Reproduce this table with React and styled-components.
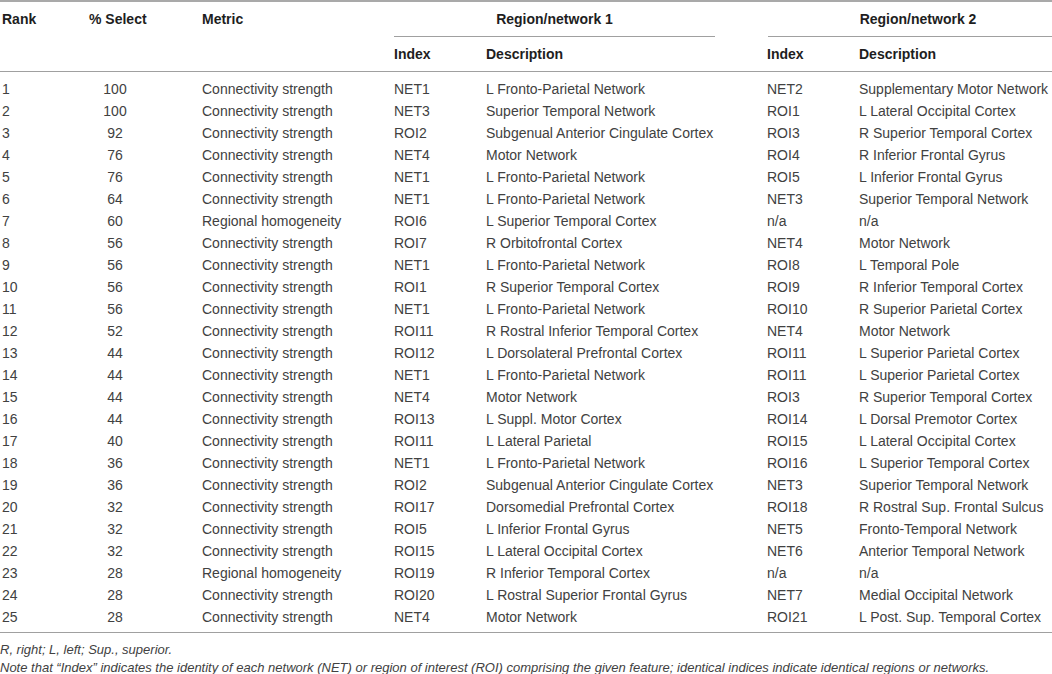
import React from "react";
import styled, { createGlobalStyle } from "styled-components";

const GlobalStyle = createGlobalStyle`
  html, body {
    margin: 0;
    padding: 0;
    background: #ffffff;
    overflow: hidden;
  }
  body {
    font-family: "Liberation Sans", Arial, Helvetica, sans-serif;
    color: #414141;
  }
`;

const Page = styled.div`
  width: 1068px;
`;

const Table = styled.table`
  width: 1068px;
  table-layout: fixed;
  border-collapse: separate;
  border-spacing: 0;
  border-top: 2px solid #a9a9a9;
  border-bottom: 1px solid #a0a0a0;
  font-size: 14px;
`;

const HeadCell = styled.th`
  text-align: left;
  font-weight: bold;
  color: #1e1e1e;
  padding: ${(p) => (p.$group ? "0" : "9px 0 8px")};
  padding-left: ${(p) => p.$pl || 0}px;
  line-height: 17px;
  vertical-align: top;
  white-space: nowrap;
  border-bottom: ${(p) => (p.$group ? "none" : "1px solid #a0a0a0")};
`;

const GroupLabel = styled.div`
  text-align: center;
  padding: 9px 0 8px;
  line-height: 17px;
  border-bottom: 1px solid #a0a0a0;
  margin-right: ${(p) => p.$mr || 0}px;
  margin-left: ${(p) => p.$ml || 0}px;
`;

const Cell = styled.td`
  line-height: 22px;
  padding: 0;
  padding-left: ${(p) => p.$pl || 0}px;
  padding-right: ${(p) => p.$pr || 0}px;
  text-align: ${(p) => (p.$center ? "center" : "left")};
  white-space: nowrap;
  color: #414141;
`;

const Row = styled.tr`
  & > td {
    padding-top: ${(p) => (p.$first ? 6 : 0)}px;
    padding-bottom: ${(p) => (p.$last ? 4 : 0)}px;
  }
`;

const Notes = styled.div`
  margin-top: 8px;
  font-size: 13px;
  font-style: italic;
  line-height: 18px;
  color: #414141;
  white-space: nowrap;
`;

const rows = [
  ["1", "100", "Connectivity strength", "NET1", "L Fronto-Parietal Network", "NET2", "Supplementary Motor Network"],
  ["2", "100", "Connectivity strength", "NET3", "Superior Temporal Network", "ROI1", "L Lateral Occipital Cortex"],
  ["3", "92", "Connectivity strength", "ROI2", "Subgenual Anterior Cingulate Cortex", "ROI3", "R Superior Temporal Cortex"],
  ["4", "76", "Connectivity strength", "NET4", "Motor Network", "ROI4", "R Inferior Frontal Gyrus"],
  ["5", "76", "Connectivity strength", "NET1", "L Fronto-Parietal Network", "ROI5", "L Inferior Frontal Gyrus"],
  ["6", "64", "Connectivity strength", "NET1", "L Fronto-Parietal Network", "NET3", "Superior Temporal Network"],
  ["7", "60", "Regional homogeneity", "ROI6", "L Superior Temporal Cortex", "n/a", "n/a"],
  ["8", "56", "Connectivity strength", "ROI7", "R Orbitofrontal Cortex", "NET4", "Motor Network"],
  ["9", "56", "Connectivity strength", "NET1", "L Fronto-Parietal Network", "ROI8", "L Temporal Pole"],
  ["10", "56", "Connectivity strength", "ROI1", "R Superior Temporal Cortex", "ROI9", "R Inferior Temporal Cortex"],
  ["11", "56", "Connectivity strength", "NET1", "L Fronto-Parietal Network", "ROI10", "R Superior Parietal Cortex"],
  ["12", "52", "Connectivity strength", "ROI11", "R Rostral Inferior Temporal Cortex", "NET4", "Motor Network"],
  ["13", "44", "Connectivity strength", "ROI12", "L Dorsolateral Prefrontal Cortex", "ROI11", "L Superior Parietal Cortex"],
  ["14", "44", "Connectivity strength", "NET1", "L Fronto-Parietal Network", "ROI11", "L Superior Parietal Cortex"],
  ["15", "44", "Connectivity strength", "NET4", "Motor Network", "ROI3", "R Superior Temporal Cortex"],
  ["16", "44", "Connectivity strength", "ROI13", "L Suppl. Motor Cortex", "ROI14", "L Dorsal Premotor Cortex"],
  ["17", "40", "Connectivity strength", "ROI11", "L Lateral Parietal", "ROI15", "L Lateral Occipital Cortex"],
  ["18", "36", "Connectivity strength", "NET1", "L Fronto-Parietal Network", "ROI16", "L Superior Temporal Cortex"],
  ["19", "36", "Connectivity strength", "ROI2", "Subgenual Anterior Cingulate Cortex", "NET3", "Superior Temporal Network"],
  ["20", "32", "Connectivity strength", "ROI17", "Dorsomedial Prefrontal Cortex", "ROI18", "R Rostral Sup. Frontal Sulcus"],
  ["21", "32", "Connectivity strength", "ROI5", "L Inferior Frontal Gyrus", "NET5", "Fronto-Temporal Network"],
  ["22", "32", "Connectivity strength", "ROI15", "L Lateral Occipital Cortex", "NET6", "Anterior Temporal Network"],
  ["23", "28", "Regional homogeneity", "ROI19", "R Inferior Temporal Cortex", "n/a", "n/a"],
  ["24", "28", "Connectivity strength", "ROI20", "L Rostral Superior Frontal Gyrus", "NET7", "Medial Occipital Network"],
  ["25", "28", "Connectivity strength", "NET4", "Motor Network", "ROI21", "L Post. Sup. Temporal Cortex"],
];

export default function App() {
  return (
    <Page>
      <GlobalStyle />
      <Table>
        <colgroup>
          <col style={{ width: 89 }} />
          <col style={{ width: 113 }} />
          <col style={{ width: 192 }} />
          <col style={{ width: 92 }} />
          <col style={{ width: 281 }} />
          <col style={{ width: 92 }} />
          <col style={{ width: 209 }} />
        </colgroup>
        <thead>
          <tr>
            <HeadCell rowSpan={2} $pl={2}>Rank</HeadCell>
            <HeadCell rowSpan={2}>% Select</HeadCell>
            <HeadCell rowSpan={2}>Metric</HeadCell>
            <HeadCell colSpan={2} $group>
              <GroupLabel $mr={52}>Region/network 1</GroupLabel>
            </HeadCell>
            <HeadCell colSpan={2} $group>
              <GroupLabel $ml={1}>Region/network 2</GroupLabel>
            </HeadCell>
          </tr>
          <tr>
            <HeadCell>Index</HeadCell>
            <HeadCell>Description</HeadCell>
            <HeadCell>Index</HeadCell>
            <HeadCell>Description</HeadCell>
          </tr>
        </thead>
        <tbody>
          {rows.map((r, i) => (
            <Row key={r[0]} $first={i === 0} $last={i === rows.length - 1}>
              <Cell $pl={2}>{r[0]}</Cell>
              <Cell $center $pr={61}>{r[1]}</Cell>
              <Cell>{r[2]}</Cell>
              <Cell>{r[3]}</Cell>
              <Cell>{r[4]}</Cell>
              <Cell>{r[5]}</Cell>
              <Cell>{r[6]}</Cell>
            </Row>
          ))}
        </tbody>
      </Table>
      <Notes>
        <div>R, right; L, left; Sup., superior.</div>
        <div>
          Note that “Index” indicates the identity of each network (NET) or region of interest (ROI) comprising the given feature; identical indices indicate identical regions or networks.
        </div>
      </Notes>
    </Page>
  );
}
